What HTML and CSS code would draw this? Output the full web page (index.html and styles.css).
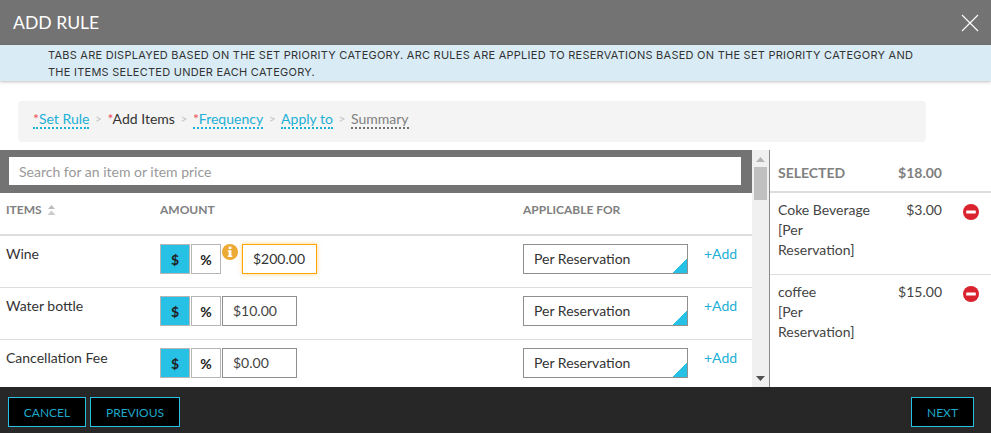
FILE: index.html
```html
<!DOCTYPE html>
<html lang="en">
<head>
<meta charset="utf-8">
<title>Add Rule</title>
<link rel="stylesheet" href="styles.css">
</head>
<body>
<div class="app">
  <header class="title-bar">
    <h1>ADD RULE</h1>
    <svg class="close" width="18" height="18" viewBox="0 0 18 18"><path d="M1 1L17 17M17 1L1 17" stroke="#fff" stroke-width="1.1" fill="none"/></svg>
  </header>
  <div class="notice">TABS ARE DISPLAYED BASED ON THE SET PRIORITY CATEGORY. ARC RULES ARE APPLIED TO RESERVATIONS BASED ON THE SET PRIORITY CATEGORY AND THE ITEMS SELECTED UNDER EACH CATEGORY.</div>
  <div class="crumb-wrap">
    <nav class="crumbs">
      <a class="crumb link"><span class="req">*</span>Set Rule</a><span class="sep">&gt;</span>
      <span class="crumb current"><span class="req">*</span>Add Items</span><span class="sep">&gt;</span>
      <a class="crumb link"><span class="req">*</span>Frequency</a><span class="sep">&gt;</span>
      <a class="crumb link">Apply to</a><span class="sep">&gt;</span>
      <a class="crumb muted">Summary</a>
    </nav>
  </div>
  <main class="main">
    <section class="items">
      <div class="items-body">
        <div class="search-band"><div class="search">Search for an item or item price</div></div>
        <div class="row head">
          <div class="th">ITEMS <svg class="sort" width="9" height="10" viewBox="0 0 9 10"><path d="M4.5 0L8 4H1Z" fill="#bbb"/><path d="M0.5 10L4.5 5.5L8.5 10Z" fill="#ccc"/></svg></div>
          <div class="th">AMOUNT</div>
          <div class="th">APPLICABLE FOR</div>
        </div>
        <div class="row item">
          <div class="name">Wine</div>
          <div class="amount">
            <span class="unit on">$</span><span class="unit">%</span>
            <svg class="info" width="16" height="16" viewBox="0 0 16 16"><circle cx="8" cy="8" r="8" fill="#eca934"/><rect x="6.7" y="2.6" width="2.7" height="2.5" fill="#fff"/><path d="M5.8 6.3H9.4V11.6H10.3V13H5.8V11.6H6.7V7.7H5.8Z" fill="#fff"/></svg>
            <span class="price warn">$200.00</span>
          </div>
          <div class="select">Per Reservation</div>
          <a class="add">+Add</a>
        </div>
        <div class="row item">
          <div class="name">Water bottle</div>
          <div class="amount"><span class="unit on">$</span><span class="unit">%</span><span class="price">$10.00</span></div>
          <div class="select">Per Reservation</div>
          <a class="add">+Add</a>
        </div>
        <div class="row item last">
          <div class="name">Cancellation Fee</div>
          <div class="amount"><span class="unit on">$</span><span class="unit">%</span><span class="price">$0.00</span></div>
          <div class="select">Per Reservation</div>
          <a class="add">+Add</a>
        </div>
      </div>
      <div class="scrollbar">
        <svg class="arrow" width="9" height="5" viewBox="0 0 9 5"><path d="M4.5 0L9 5H0Z" fill="#b4b4b4"/></svg>
        <div class="thumb"></div>
        <svg class="arrow down" width="9" height="5" viewBox="0 0 9 5"><path d="M0 0H9L4.5 5Z" fill="#505050"/></svg>
      </div>
    </section>
    <aside class="selected">
      <div class="sel-head"><span class="sel-name">SELECTED</span><span class="sel-price">$18.00</span></div>
      <div class="sel-row">
        <div class="sel-name">Coke Beverage [Per Reservation]</div><div class="sel-price">$3.00</div>
        <svg class="minus" width="16" height="16" viewBox="0 0 16 16"><circle cx="8" cy="8" r="8" fill="#d9232e"/><rect x="3.2" y="6.4" width="9.6" height="3.2" rx="0.6" fill="#fff"/></svg>
      </div>
      <div class="sel-row plain">
        <div class="sel-name">coffee<br>[Per Reservation]</div><div class="sel-price">$15.00</div>
        <svg class="minus" width="16" height="16" viewBox="0 0 16 16"><circle cx="8" cy="8" r="8" fill="#d9232e"/><rect x="3.2" y="6.4" width="9.6" height="3.2" rx="0.6" fill="#fff"/></svg>
      </div>
    </aside>
  </main>
  <footer class="footer">
    <button class="btn cancel">CANCEL</button>
    <button class="btn prev">PREVIOUS</button>
    <button class="btn next">NEXT</button>
  </footer>
</div>
</body>
</html>
```
FILE: styles.css
```css
* { box-sizing: border-box; }
html, body { margin: 0; padding: 0; background: #fff; }
body { font-family: Lato, "Liberation Sans", sans-serif; color: #333; font-size: 14px; }
.app { width: 991px; height: 433px; display: flex; flex-direction: column; overflow: hidden; }

.title-bar { flex: 0 0 45px; background: #737373; display: flex; align-items: center; justify-content: space-between; padding: 0 13px; }
.title-bar h1 { margin: 0; font-size: 17.6px; line-height: 44px; font-weight: 400; color: #fff; }
.close { margin-top: 1px; margin-right: -1px; }

.notice { flex: 0 0 36px; background: #d9ecf6; padding: 2px 65px 0 48px; font-family: Inter, "Open Sans", sans-serif; font-size: 11px; letter-spacing: 0.25px; line-height: 17px; color: #333; box-shadow: 0 1px 3px rgba(0,0,0,.25); position: relative; }

.crumb-wrap { flex: 0 0 69px; padding: 20px 65px 8px 18px; }
.crumbs { height: 41px; background: #f4f4f4; border-radius: 4px; padding: 8px 15px 0; display: flex; align-items: flex-start; font-size: 14px; line-height: 19px; }
.crumb { display: block; height: 20px; }
.crumb.link { color: #1cb0d6; border-bottom: 2px dotted #1cb0d6; }
.crumb.muted { color: #808080; border-bottom: 2px dotted #707070; }
.crumb.current { color: #333; }
.req { color: #f0505a; }
.sep { color: #c4c4c4; width: 18px; text-align: center; font-size: 12px; }

.main { flex: 0 0 237px; display: flex; min-height: 0; }
.items { flex: 0 0 770px; display: flex; border-right: 1px solid #8a8a8a; }
.items-body { width: 752px; overflow: hidden; }
.search-band { height: 43px; background: #737373; padding: 7px 11px 8px 9px; }
.search { height: 28px; background: #fff; color: #999; font-size: 14px; line-height: 30px; padding-left: 10px; }

.row { display: grid; grid-template-columns: 160px 363px 181px 48px; }
.head { height: 43px; border-bottom: 2px solid #ddd; }
.th { font-size: 12px; font-weight: 700; color: #808080; padding-top: 9px; line-height: 15px; }
.th:first-child { padding-left: 6px; }
.sort { margin-left: 2px; vertical-align: -1px; }

.item { height: 52px; border-bottom: 1px solid #ddd; padding-top: 8px; }
.item.last { border-bottom: 0; }
.name { padding: 1px 0 0 6px; line-height: 17px; font-size: 14px; color: #333; }
.amount { display: flex; align-items: flex-start; gap: 1px; }
.unit { width: 30px; height: 30px; border: 1px solid #b5b5b5; background: #fff; font-size: 14px; font-weight: 700; color: #222; text-align: center; line-height: 29px; }
.unit.on { background: #27c1e6; }
.price { width: 75px; height: 30px; border: 1px solid #8f8f8f; padding-left: 10px; line-height: 27px; color: #444; font-size: 14px; }
.price.warn { border-color: #ffa500; box-shadow: 0 0 4px rgba(255,165,0,.5); color: #333; }
.info { margin: 0 3px 0 0; }
.select { width: 165px; height: 30px; border: 1px solid #8f8f8f; padding-left: 10px; line-height: 27px; font-size: 14px; color: #333; background: linear-gradient(135deg, #fff 0, #fff calc(100% - 10.6px), #27c1e6 calc(100% - 10.6px)); }
.add { color: #1cb0d6; font-size: 14px; line-height: 19px; white-space: nowrap; }

.scrollbar { width: 17px; background: #f0f0f0; display: flex; flex-direction: column; align-items: center; padding-top: 7px; }
.thumb { width: 13px; height: 33px; background: #c0c0c0; margin-top: 5px; }
.arrow.down { margin-top: auto; margin-bottom: 6px; }

.selected { flex: 1; min-width: 0; }
.sel-head { height: 43px; border-bottom: 2px solid #ddd; display: grid; grid-template-columns: 105px 59px; padding-left: 8px; line-height: 46px; font-weight: 700; color: #808080; font-size: 14px; }
.sel-price { text-align: right; }
.sel-row { height: 82px; border-bottom: 1px solid #ddd; display: grid; grid-template-columns: 105px 59px 1fr; padding: 7px 0 0 8px; line-height: 20px; font-size: 14px; color: #444; }
.sel-row.plain { border-bottom: 0; }
.sel-row .sel-name { width: 96px; }
.minus { margin: 4px 0 0 21px; }

.footer { flex: 1; background: #272727; padding: 10px 17px 6px 8px; display: flex; gap: 4px; }
.btn { height: 30px; background: #000; border: 1px solid #27c1e6; color: #1ea8c9; font-family: Lato, sans-serif; font-size: 12px; padding: 0; }
.cancel { width: 78px; }
.prev { width: 90px; }
.next { width: 63px; margin-left: auto; }
```
